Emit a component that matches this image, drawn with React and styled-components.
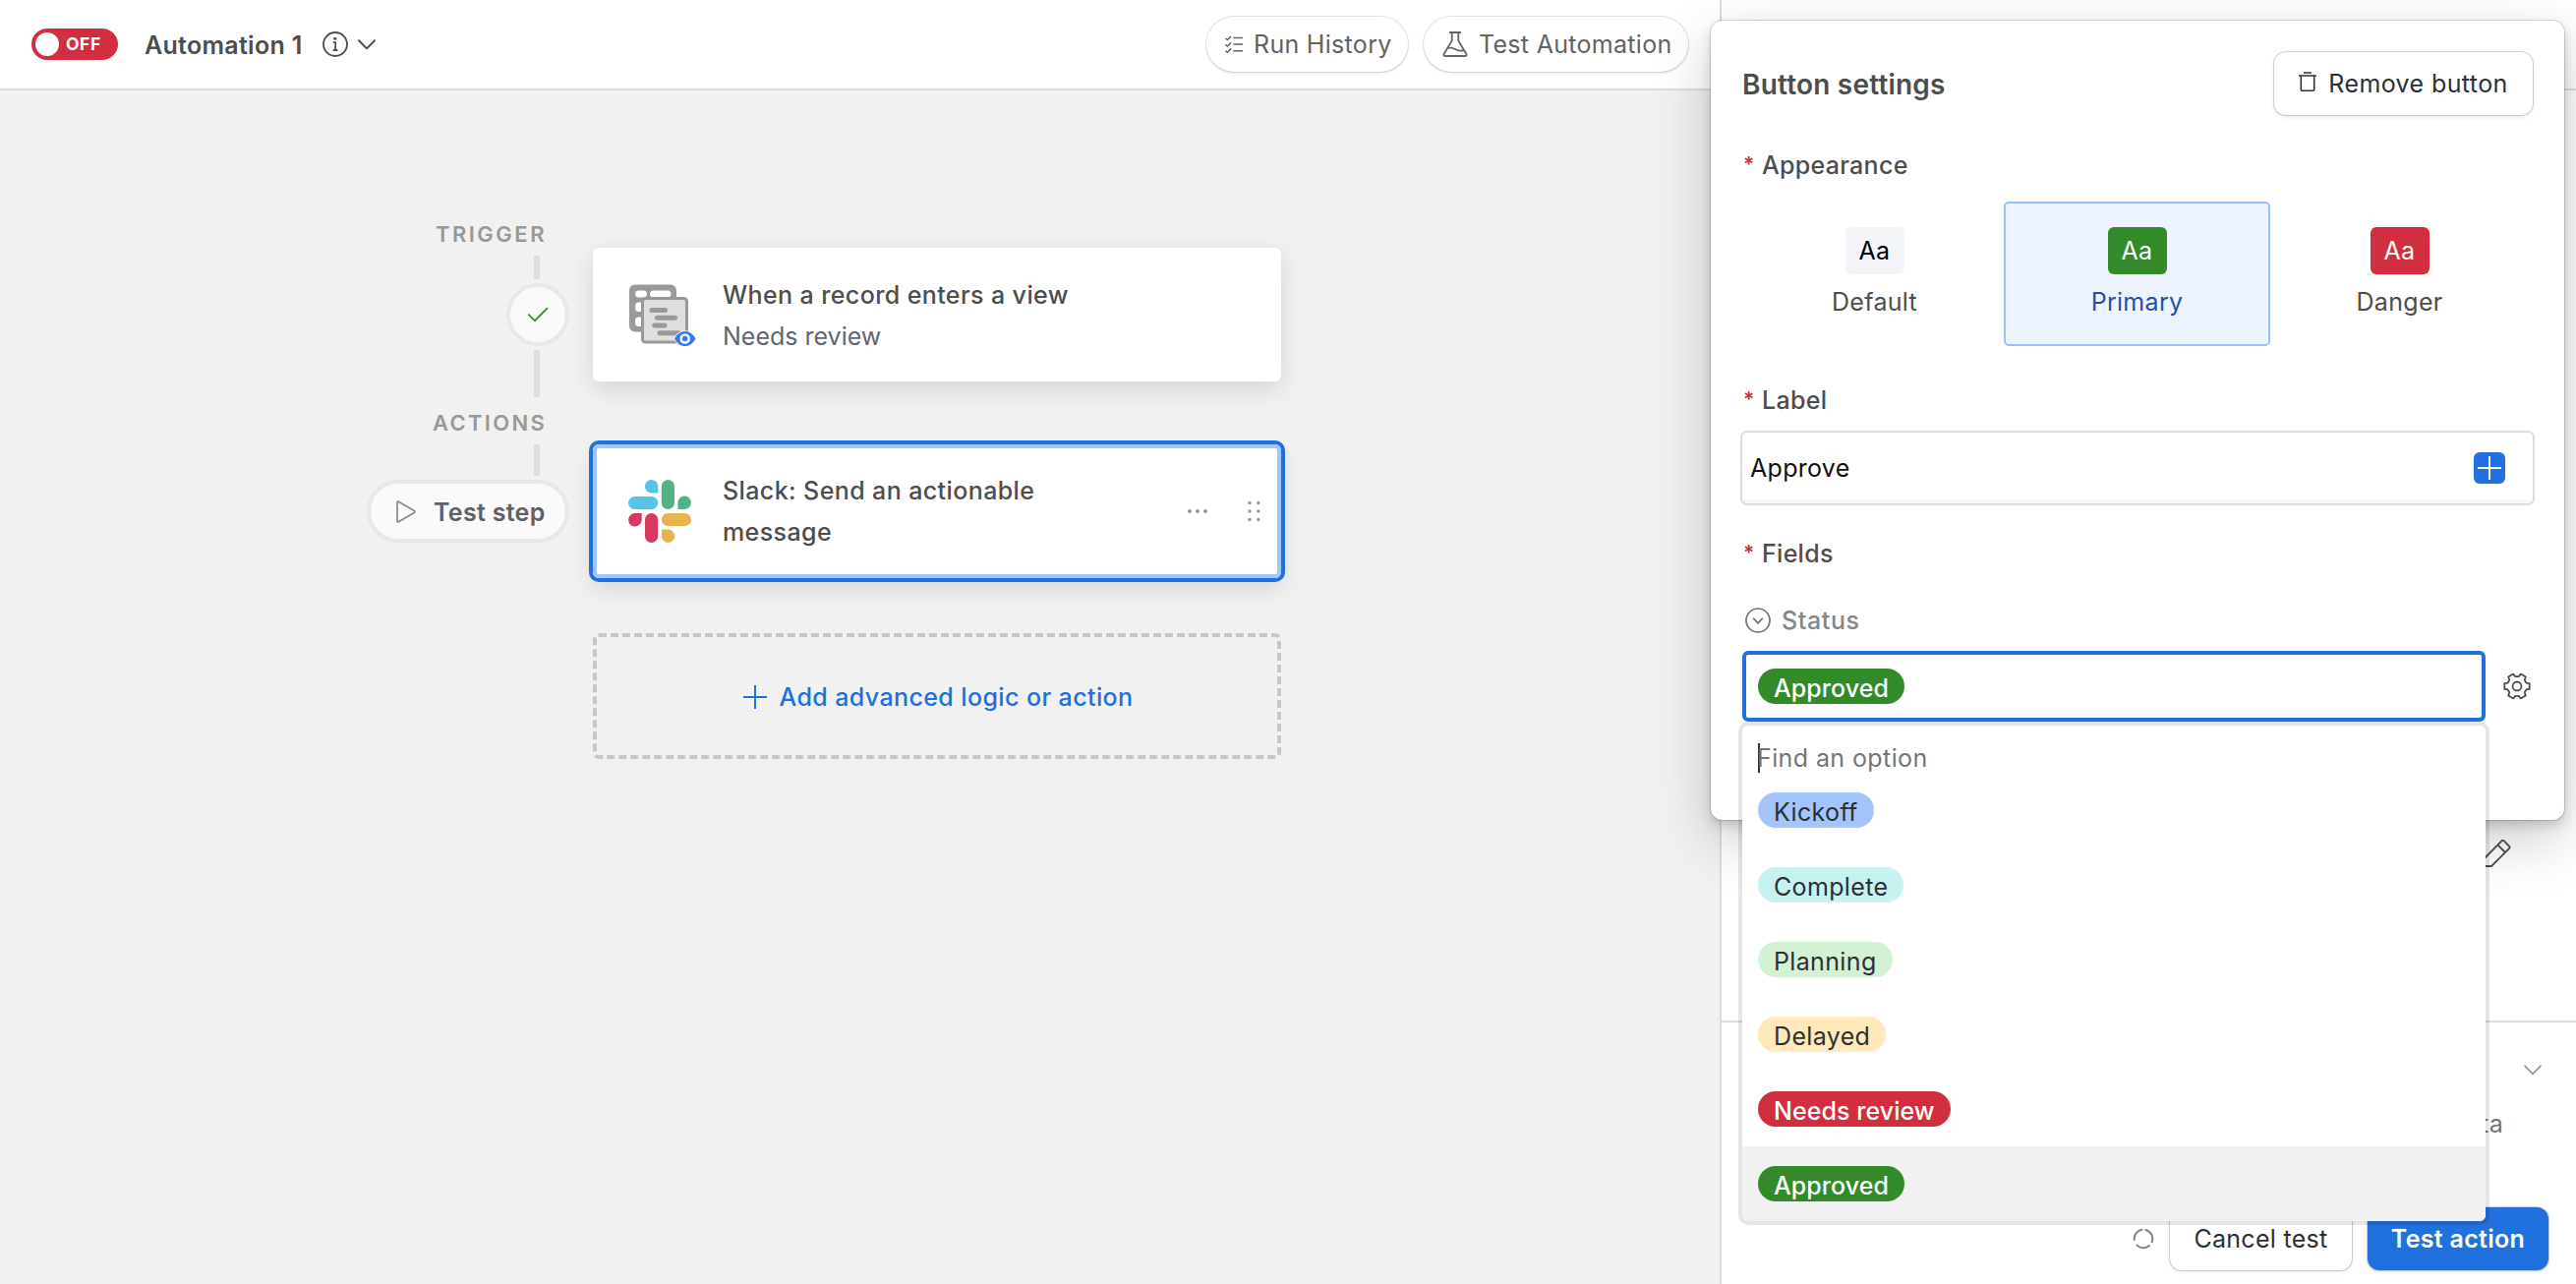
import React, { useState } from 'react'
import styled, { createGlobalStyle, css } from 'styled-components'

const colors = {
  blue: '#2070dd',
  lightBlue: '#a0c6ff',
  green: '#338a29',
  red: '#d12e40',
  text: '#4d4d4d',
  dark: '#2d2f33',
  line: '#dddddd',
  canvas: '#f1f1f1',
}

const options = [
  { name: 'Kickoff', bg: '#a3c5fc', color: colors.dark },
  { name: 'Complete', bg: '#c7f2ef', color: colors.dark },
  { name: 'Planning', bg: '#d3f2d4', color: colors.dark },
  { name: 'Delayed', bg: '#ffe9bb', color: colors.dark },
  { name: 'Needs review', bg: colors.red, color: '#fff' },
  { name: 'Approved', bg: colors.green, color: '#fff' },
]

const appearances = [
  { name: 'Default', bg: '#f2f4f8', color: '#000' },
  { name: 'Primary', bg: colors.green, color: '#fff' },
  { name: 'Danger', bg: colors.red, color: '#fff' },
]

const GlobalStyle = createGlobalStyle`
  * {
    box-sizing: border-box;
  }
  body {
    margin: 0;
    overflow: hidden;
    font-family: Inter, 'Liberation Sans', sans-serif;
    font-size: 25px;
    line-height: 30px;
    letter-spacing: 0.3px;
    color: ${colors.text};
  }
  button, input {
    font: inherit;
    letter-spacing: inherit;
    color: inherit;
  }
  svg {
    display: block;
    flex-shrink: 0;
  }
`

const Page = styled.div`
  position: relative;
  display: flex;
  width: 2620px;
  height: 1306px;
  overflow: hidden;
  background-color: #fff;
`

const Editor = styled.main`
  display: flex;
  flex-direction: column;
  width: 1749px;
`

const TopBar = styled.header`
  display: flex;
  align-items: center;
  height: 92px;
  padding: 0 32px;
  border-bottom: 2px solid ${colors.line};
`

const Toggle = styled.button`
  display: flex;
  align-items: center;
  gap: 7px;
  width: 88px;
  height: 32px;
  padding: 0 4px;
  border: none;
  border-radius: 16px;
  background-color: ${colors.red};
  color: #fff;
  font-size: 17.5px;
  font-weight: 700;
  line-height: 32px;
  letter-spacing: 0.6px;
`

const Knob = styled.span`
  width: 24px;
  height: 24px;
  border-radius: 50%;
  background-color: #fff;
`

const AutomationName = styled.h1`
  margin: 1px 20px 0 27px;
  font-size: 25px;
  font-weight: 600;
`

const NameTools = styled.div`
  display: flex;
  align-items: center;
  gap: 10px;
`

const TopActions = styled.div`
  display: flex;
  gap: 16px;
  margin-left: auto;
`

const RoundButton = styled.button`
  display: flex;
  align-items: center;
  gap: 11px;
  width: ${({ $width }) => $width}px;
  height: 56px;
  padding: 0 0 0 19px;
  border: none;
  border-radius: 28px;
  background-color: #fff;
  color: #636363;
  white-space: nowrap;
  box-shadow: 0 0 0 1px rgba(0, 0, 0, 0.12), 0 2px 3px rgba(0, 0, 0, 0.08);
`

const Canvas = styled.div`
  display: flex;
  flex: 1;
  gap: 24px;
  background-color: ${colors.canvas};
`

const Rail = styled.div`
  display: flex;
  flex-direction: column;
  align-items: flex-end;
  gap: 4px;
  width: 579px;
  padding-top: 133px;
`

const RailTitle = styled.div`
  height: 26px;
  margin: ${({ $spaced }) => ($spaced ? '9px 23px 5px 0' : '0 23px 5px 0')};
  color: #989898;
  font-size: 22px;
  font-weight: 600;
  line-height: 26px;
  letter-spacing: ${({ $spaced }) => ($spaced ? 2.3 : 2.5)}px;
`

const RailLine = styled.div`
  width: 6px;
  height: ${({ $height }) => $height}px;
  margin-right: 30px;
  background-color: #dfdfdf;
`

const StepStatus = styled.div`
  display: flex;
  align-items: center;
  justify-content: center;
  width: 64px;
  height: 64px;
  border: 4px solid #e8e8e8;
  border-radius: 50%;
  background-color: #fafafa;
`

const TestStep = styled.button`
  display: flex;
  align-items: center;
  gap: 18px;
  width: 206px;
  height: 64px;
  padding: 1px 0 0 26px;
  border: 4px solid #e8e8e8;
  border-radius: 32px;
  background-color: #fafafa;
  color: #5f6068;
  font-weight: 600;
`

const Steps = styled.div`
  display: flex;
  flex-direction: column;
  width: 700px;
  padding-top: 160px;
`

const StepCard = styled.section`
  display: flex;
  align-items: center;
  height: 136px;
  padding: 2px 20px 0 37px;
  border-radius: 6px;
  background-color: #fff;
  box-shadow: 0 8px 24px rgba(0, 0, 0, 0.12);
  ${({ $selected }) =>
    $selected &&
    css`
      margin-top: 64px;
      padding: 0 21px 0 36px;
      box-shadow: inset 0 0 0 4px ${colors.lightBlue}, 0 0 0 4px ${colors.blue},
        0 10px 24px rgba(0, 0, 0, 0.12);
    `}
`

const StepText = styled.div`
  width: 380px;
  margin-left: ${({ $gap }) => $gap}px;
  line-height: 42px;
  letter-spacing: 0.4px;
`

const StepTitle = styled.div`
  font-weight: 500;
`

const StepSubtitle = styled.div`
  color: #616670;
  letter-spacing: 0;
`

const StepTools = styled.div`
  display: flex;
  align-items: center;
  gap: 39px;
  margin-left: auto;
`

const AddStep = styled.button`
  display: flex;
  align-items: center;
  justify-content: center;
  gap: 12px;
  height: 128px;
  margin-top: 56px;
  padding: 1px 0 0 3px;
  border: 4px dashed #c4c7cf;
  border-radius: 6px;
  background-color: transparent;
  color: ${colors.blue};
  font-weight: 500;
  letter-spacing: 0.4px;
`

const SidePanel = styled.aside`
  display: flex;
  flex: 1;
  flex-direction: column;
  border-left: 2px solid ${colors.line};
`

const PanelHeader = styled.div`
  height: 92px;
  border-bottom: 2px solid ${colors.line};
`

const PanelSection = styled.div`
  display: flex;
  align-items: flex-end;
  justify-content: flex-end;
  height: 948px;
  padding: 0 66px 155px 0;
  border-bottom: 2px solid ${colors.line};
`

const TestSection = styled.div`
  display: flex;
  flex: 1;
  flex-direction: column;
  align-items: flex-end;
  padding: 43px 35px 0 0;
`

const TestHint = styled.div`
  margin: 34px 39px 0 0;
  color: #757575;
`

const PanelFooter = styled.footer`
  display: flex;
  align-items: center;
  justify-content: flex-end;
  gap: 16px;
  padding: 0 28px 14px 0;
`

const Button = styled.button`
  display: flex;
  align-items: center;
  justify-content: center;
  gap: 12px;
  width: ${({ $width }) => $width}px;
  height: 64px;
  padding: 0;
  border: none;
  border-radius: 12px;
  background-color: ${({ $primary }) => ($primary ? colors.blue : '#fff')};
  color: ${({ $primary }) => ($primary ? '#fff' : colors.dark)};
  font-weight: ${({ $primary }) => ($primary ? 600 : 400)};
  box-shadow: 0 0 0 1px rgba(0, 0, 0, 0.16), 0 2px 4px rgba(0, 0, 0, 0.1);
`

const RemoveButton = styled(Button)`
  letter-spacing: 0.4px;
  svg {
    margin-bottom: 4px;
  }
`

const Popover = styled.div`
  position: absolute;
  top: 21px;
  right: 12px;
  width: 868px;
  height: 813px;
  padding: 32px 32px 0 33px;
  border-radius: 12px;
  background-color: #fff;
  box-shadow: 0 0 0 1px rgba(0, 0, 0, 0.14), 0 6px 12px rgba(0, 0, 0, 0.16),
    0 20px 60px rgba(0, 0, 0, 0.2);
`

const PopoverHeader = styled.div`
  display: flex;
  align-items: center;
  justify-content: space-between;
  margin-bottom: 36px;
`

const PopoverTitle = styled.h2`
  margin: 2px 0 0 -1px;
  font-size: 28px;
  font-weight: 600;
  letter-spacing: 0.2px;
`

const FieldLabel = styled.div`
  display: flex;
  margin-top: ${({ $top }) => $top}px;
  font-weight: 500;
`

const Required = styled.span`
  width: 19px;
  color: ${colors.red};
  font-size: 21px;
  font-weight: 600;
`

const Tiles = styled.div`
  display: grid;
  grid-template-columns: repeat(3, 267px);
  margin: 22px 0 40px;
`

const Tile = styled.button`
  display: flex;
  flex-direction: column;
  align-items: center;
  gap: 13px;
  height: 147px;
  margin: 0 -2px;
  padding: 24px 0 0;
  border: 2px solid ${({ $selected }) => ($selected ? '#9bc1fa' : 'transparent')};
  border-radius: 5px;
  background-color: ${({ $selected }) => ($selected ? '#edf4ff' : 'transparent')};
  color: ${({ $selected }) => ($selected ? '#254fad' : colors.text)};
`

const Swatch = styled.span`
  width: 60px;
  height: 48px;
  border-radius: 6px;
  background-color: ${({ $bg }) => $bg};
  color: ${({ $color }) => $color};
  line-height: 49px;
  text-align: center;
`

const TextField = styled.div`
  display: flex;
  align-items: center;
  justify-content: space-between;
  height: 76px;
  margin: 16px -2px 0 -3px;
  padding: 0 28px 0 8px;
  border: 2px solid ${colors.line};
  border-radius: 7px;
  color: #111;
  line-height: 32px;
  box-shadow: inset 0 -4px 0 #f8f8f8;
`

const InsertToken = styled.button`
  display: flex;
  align-items: center;
  justify-content: center;
  width: 32px;
  height: 32px;
  padding: 0;
  border: none;
  border-radius: 6px;
  background-color: ${colors.blue};
`

const StatusLabel = styled.div`
  display: flex;
  align-items: center;
  gap: 11px;
  margin: 38px 0 16px 2px;
  color: #858585;
  font-weight: 500;
  letter-spacing: 0.6px;
`

const SelectRow = styled.div`
  position: relative;
  display: flex;
  align-items: center;
  gap: 18px;
  margin-left: -1px;
`

const Select = styled.div`
  display: flex;
  align-items: center;
  width: 756px;
  height: 72px;
  padding: 0 12px;
  border: 4px solid ${colors.blue};
  border-radius: 6px;
`

const Pill = styled.span`
  height: 36px;
  padding: 1px 16px 0;
  border-radius: 18px;
  background-color: ${({ $bg }) => $bg};
  color: ${({ $color }) => $color};
  font-weight: ${({ $color }) => ($color === '#fff' ? 500 : 400)};
  letter-spacing: ${({ $color }) => ($color === '#fff' ? 0.06 : 0.35)}px;
  line-height: 38px;
`

const Menu = styled.div`
  position: absolute;
  top: 76px;
  left: 0;
  width: 756px;
  border-radius: 6px;
  background-color: #fff;
  box-shadow: 0 0 0 4px rgba(0, 0, 0, 0.1);
  overflow: hidden;
`

const Search = styled.div`
  display: flex;
  align-items: center;
  height: 48px;
  padding: 18px 16px 0;
  color: #757575;
  letter-spacing: 0.4px;
`

const Caret = styled.span`
  width: 2px;
  height: 30px;
  margin-right: -3px;
  background-color: #333;
`

const Option = styled.div`
  display: flex;
  align-items: center;
  height: 76px;
  padding: 0 16px;
  background-color: ${({ $active }) => ($active ? '#f1f1f1' : '#fff')};
`

const InfoIcon = () => (
  <svg width="26" height="26" viewBox="0 0 26 26" fill="none" stroke="#4d4d4d">
    <circle cx="13" cy="13" r="12" strokeWidth="1.8" />
    <path d="M10.8 11.2H13.2V19M10.8 19H15.4" strokeWidth="1.8" />
    <circle cx="12.8" cy="7.3" r="1.5" fill="#4d4d4d" stroke="none" />
  </svg>
)

const ChevronIcon = ({ color, strokeWidth = 2 }) => (
  <svg width="18" height="11" viewBox="0 0 18 11" fill="none" stroke={color} strokeWidth={strokeWidth}>
    <path d="M1 1.2L9 9.4L17 1.2" strokeLinecap="round" strokeLinejoin="round" />
  </svg>
)

const ChecklistIcon = () => (
  <svg width="18" height="18" viewBox="0 0 18 18" fill="none" stroke="#636363" strokeWidth="1.5">
    <path d="M0.5 3L2.4 4.6L6 1M0.5 9.4L2.4 11L6 7.4M0.5 15.6L2.4 17.2L6 13.6" />
    <path d="M8.4 2.4H18M8.4 9.1H18M8.4 15.8H18" />
  </svg>
)

const FlaskIcon = () => (
  <svg width="26" height="26" viewBox="0 0 26 26" fill="none" stroke="#636363" strokeWidth="1.8" strokeLinejoin="round">
    <path d="M7 1H19M9.7 1V9.4L1.6 23C1.1 24 1.5 25 2.6 25H23.4C24.5 25 24.9 24 24.4 23L16.3 9.4V1" />
    <path d="M6 17C10 15.6 12 17.6 14.5 18.8C17 20 19 20 21.8 19.2" />
  </svg>
)

const CheckIcon = () => (
  <svg width="22" height="16" viewBox="0 0 22 16" fill="none" stroke={colors.green} strokeWidth="1.7">
    <path d="M1.2 7.6L8 14.2L21 1.2" />
  </svg>
)

const PlayIcon = () => (
  <svg width="20" height="23" viewBox="0 0 20 23" fill="none" stroke="#858891" strokeWidth="1.7" strokeLinejoin="round">
    <path d="M1 2V21C1 21.9 1.6 22.2 2.3 21.8L18.4 12.4C19.2 11.9 19.2 11.1 18.4 10.6L2.3 1.2C1.6 0.8 1 1.1 1 2Z" />
  </svg>
)

const RecordViewIcon = () => (
  <svg width="68" height="64" viewBox="0 0 68 64">
    <rect x="0" y="0.5" width="48" height="48" rx="6" fill="#999" />
    <rect x="6" y="6.5" width="12" height="7" rx="3.5" fill="#fff" />
    <rect x="21" y="6.5" width="21.5" height="7" rx="3.5" fill="#fff" />
    <rect x="6" y="18.5" width="11" height="9.5" rx="3.5" fill="#fff" />
    <rect x="6" y="33.5" width="11" height="9.5" rx="3.5" fill="#fff" />
    <rect x="13.5" y="14.5" width="45" height="44.5" rx="3" fill="#dedede" stroke="#999" strokeWidth="3" />
    <g stroke="#999" strokeWidth="5" strokeLinecap="round">
      <path d="M23 26.5H36.5M28.5 34.3H46.5M25.8 42H36M31 49.7H50" />
    </g>
    <path
      d="M46 55.5C48.5 50.5 52.5 48 56.7 48S65 50.5 67.4 55.5C65 60.5 61 63 56.7 63S48.5 60.5 46 55.5Z"
      fill="#2f7df6"
      stroke="#fff"
      strokeWidth="1.6"
      paintOrder="stroke"
    />
    <circle cx="56.7" cy="55.5" r="4" fill="#2f7df6" stroke="#fff" strokeWidth="2.6" />
  </svg>
)

const SlackIcon = () => (
  <svg width="64" height="64" viewBox="0 0 64 64">
    <g fill="#56c3ec">
      <path d="M30.3 13.5H23.7A6.7 6.7 0 1 1 30.3 6.8Z" />
      <rect x="0" y="17" width="30.3" height="13" rx="6.5" />
    </g>
    <g fill="#53b283">
      <rect x="33.8" y="0" width="13.2" height="30" rx="6.6" />
      <path d="M50.5 30V23.5A6.7 6.7 0 1 1 57.2 30Z" />
    </g>
    <g fill="#d63a5c">
      <path d="M13.7 34V40.4A6.8 6.8 0 1 1 6.9 34Z" />
      <rect x="17" y="34" width="13.2" height="30" rx="6.6" />
    </g>
    <g fill="#e8b34b">
      <rect x="33.8" y="34" width="30.2" height="13" rx="6.5" />
      <path d="M33.8 50.5H40.4A6.7 6.7 0 1 1 33.8 57.2Z" />
    </g>
  </svg>
)

const MoreIcon = () => (
  <svg width="22" height="6" viewBox="0 0 22 6" fill="#999">
    <circle cx="3" cy="3" r="2" />
    <circle cx="11" cy="3" r="2" />
    <circle cx="19" cy="3" r="2" />
  </svg>
)

const DragIcon = () => (
  <svg width="14" height="22" viewBox="0 0 14 22" fill="#999">
    {[2.5, 11, 19.5].map(y => (
      <g key={y}>
        <circle cx="3" cy={y} r="1.7" />
        <circle cx="11.8" cy={y} r="1.7" />
      </g>
    ))}
  </svg>
)

const PlusIcon = ({ color }) => (
  <svg width="24" height="24" viewBox="0 0 24 24" stroke={color} strokeWidth="2">
    <path d="M12 0V24M0 12H24" />
  </svg>
)

const TrashIcon = () => (
  <svg width="18" height="20" viewBox="0 0 18 20" fill="none" stroke="#333" strokeWidth="1.6">
    <path d="M0 4H18M5 1H13M2.3 4V18.2C2.3 18.8 2.6 19.2 3.2 19.2H14.8C15.4 19.2 15.7 18.8 15.7 18.2V4" />
  </svg>
)

const SelectFieldIcon = () => (
  <svg width="26" height="26" viewBox="0 0 26 26" fill="none" stroke="#757575" strokeWidth="1.7">
    <circle cx="13" cy="13" r="12" />
    <path d="M8.6 11.2L13 15.8L17.4 11.2" strokeLinecap="round" strokeLinejoin="round" />
  </svg>
)

// six teeth, each one is two outer points followed by the two points of the valley
const gearPoints = [0, 60, 120, 180, 240, 300]
  .flatMap(angle => [
    [angle - 13, 13],
    [angle + 13, 13],
    [angle + 20, 10],
    [angle + 40, 10],
  ])
  .map(([angle, r]) => {
    const rad = (angle * Math.PI) / 180
    return `${(14 + r * Math.cos(rad)).toFixed(2)},${(14 + r * Math.sin(rad)).toFixed(2)}`
  })
  .join(' ')

const GearIcon = () => (
  <svg width="28" height="28" viewBox="0 0 28 28" fill="none" stroke="#4d4d4d" strokeWidth="1.8" strokeLinejoin="round">
    <circle cx="14" cy="14" r="4.5" />
    <polygon points={gearPoints} />
  </svg>
)

const PencilIcon = () => (
  <svg width="30" height="30" viewBox="0 0 30 30" fill="none" stroke="#4d4d4d" strokeWidth="1.8" strokeLinejoin="round">
    <path d="M2 28V21L20.6 2.2C21.2 1.6 22 1.6 22.6 2.2L28.2 7.8C28.8 8.4 28.8 9.2 28.2 9.8L10 28ZM16.4 6.4L24 14" />
  </svg>
)

const SpinnerIcon = () => (
  <svg width="22" height="22" viewBox="0 0 22 22" fill="none" stroke="#858585" strokeWidth="2">
    <path d="M13.4 2A9.3 9.3 0 0 1 19.6 14.4M17 18.1A9.3 9.3 0 0 1 4.4 17.6M1.8 12A9.3 9.3 0 0 1 9.6 1.8" strokeLinecap="round" />
  </svg>
)

function Tag({ option }) {
  return (
    <Pill $bg={option.bg} $color={option.color}>
      {option.name}
    </Pill>
  )
}

function Workflow() {
  return (
    <Canvas>
      <Rail>
        <RailTitle>TRIGGER</RailTitle>
        <RailLine $height={24} />
        <StepStatus>
          <CheckIcon />
        </StepStatus>
        <RailLine $height={48} />
        <RailTitle $spaced>ACTIONS</RailTitle>
        <RailLine $height={32} />
        <TestStep>
          <PlayIcon />
          Test step
        </TestStep>
      </Rail>
      <Steps>
        <StepCard>
          <RecordViewIcon />
          <StepText $gap={27}>
            <StepTitle>When a record enters a view</StepTitle>
            <StepSubtitle>Needs review</StepSubtitle>
          </StepText>
        </StepCard>
        <StepCard $selected>
          <SlackIcon />
          <StepText $gap={32}>
            <StepTitle>Slack: Send an actionable message</StepTitle>
          </StepText>
          <StepTools>
            <MoreIcon />
            <DragIcon />
          </StepTools>
        </StepCard>
        <AddStep>
          <PlusIcon color={colors.blue} />
          Add advanced logic or action
        </AddStep>
      </Steps>
    </Canvas>
  )
}

function ButtonSettings() {
  const [appearance, setAppearance] = useState('Primary')
  const [status, setStatus] = useState(options[5])

  return (
    <Popover>
      <PopoverHeader>
        <PopoverTitle>Button settings</PopoverTitle>
        <RemoveButton $width={263}>
          <TrashIcon />
          Remove button
        </RemoveButton>
      </PopoverHeader>
      <FieldLabel>
        <Required>*</Required>
        Appearance
      </FieldLabel>
      <Tiles>
        {appearances.map(({ name, bg, color }) => (
          <Tile key={name} $selected={appearance === name} onClick={() => setAppearance(name)}>
            <Swatch $bg={bg} $color={color}>
              Aa
            </Swatch>
            {name}
          </Tile>
        ))}
      </Tiles>
      <FieldLabel>
        <Required>*</Required>
        Label
      </FieldLabel>
      <TextField>
        Approve
        <InsertToken>
          <PlusIcon color="#fff" />
        </InsertToken>
      </TextField>
      <FieldLabel $top={34}>
        <Required>*</Required>
        Fields
      </FieldLabel>
      <StatusLabel>
        <SelectFieldIcon />
        Status
      </StatusLabel>
      <SelectRow>
        <Select>
          <Tag option={status} />
        </Select>
        <GearIcon />
        <Menu>
          <Search>
            <Caret />
            Find an option
          </Search>
          {options.map(option => (
            <Option key={option.name} $active={option.name === status.name} onClick={() => setStatus(option)}>
              <Tag option={option} />
            </Option>
          ))}
        </Menu>
      </SelectRow>
    </Popover>
  )
}

function App() {
  return (
    <Page>
      <GlobalStyle />
      <Editor>
        <TopBar>
          <Toggle>
            <Knob />
            OFF
          </Toggle>
          <AutomationName>Automation 1</AutomationName>
          <NameTools>
            <InfoIcon />
            <ChevronIcon color="#4d4d4d" />
          </NameTools>
          <TopActions>
            <RoundButton $width={205}>
              <ChecklistIcon />
              Run History
            </RoundButton>
            <RoundButton $width={269}>
              <FlaskIcon />
              Test Automation
            </RoundButton>
          </TopActions>
        </TopBar>
        <Workflow />
      </Editor>
      <SidePanel>
        <PanelHeader />
        <PanelSection>
          <PencilIcon />
        </PanelSection>
        <TestSection>
          <ChevronIcon color="#999" strokeWidth={1.7} />
          <TestHint>data</TestHint>
        </TestSection>
        <PanelFooter>
          <SpinnerIcon />
          <Button $width={185}>Cancel test</Button>
          <Button $width={184} $primary>
            Test action
          </Button>
        </PanelFooter>
      </SidePanel>
      <ButtonSettings />
    </Page>
  )
}

export default App
